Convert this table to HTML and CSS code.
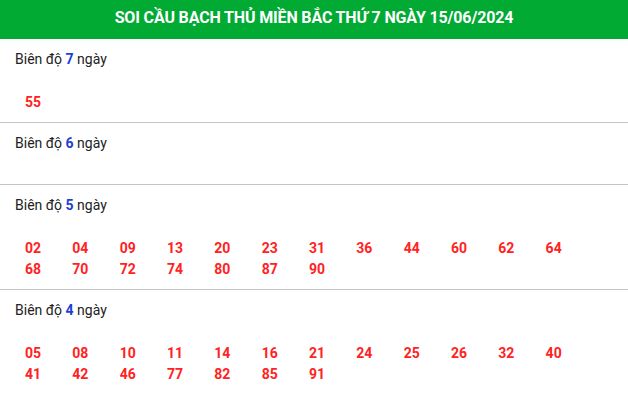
FILE: index.html
```html
<!DOCTYPE html>
<html lang="vi">
<head>
<meta charset="utf-8">
<link rel="stylesheet" href="styles.css">
</head>
<body>
<div class="box">
  <h2 class="title">SOI CẦU BẠCH THỦ MIỀN BẮC THỨ 7 NGÀY 15/06/2024</h2>
  <div class="section">
    <div class="label">Biên độ <b>7</b> ngày</div>
    <div class="nums"><span>55</span></div>
  </div>
  <div class="section">
    <div class="label">Biên độ <b>6</b> ngày</div>
    <div class="nums"></div>
  </div>
  <div class="section">
    <div class="label">Biên độ <b>5</b> ngày</div>
    <div class="nums">
      <span>02</span><span>04</span><span>09</span><span>13</span><span>20</span><span>23</span><span>31</span><span>36</span><span>44</span><span>60</span><span>62</span><span>64</span>
      <span>68</span><span>70</span><span>72</span><span>74</span><span>80</span><span>87</span><span>90</span>
    </div>
  </div>
  <div class="section">
    <div class="label">Biên độ <b>4</b> ngày</div>
    <div class="nums">
      <span>05</span><span>08</span><span>10</span><span>11</span><span>14</span><span>16</span><span>21</span><span>24</span><span>25</span><span>26</span><span>32</span><span>40</span>
      <span>41</span><span>42</span><span>46</span><span>77</span><span>82</span><span>85</span><span>91</span>
    </div>
  </div>
</div>
</body>
</html>
```
FILE: styles.css
```css
html, body {
  margin: 0;
  padding: 0;
  background: #fff;
}
body {
  font-family: Roboto, "Liberation Sans", Arial, sans-serif;
  color: #222;
}
.title {
  margin: 0;
  height: 39px;
  background: #00aa33;
  color: #fff;
  font-size: 16px;
  font-weight: bold;
  text-align: center;
  line-height: 36px;
  letter-spacing: -0.15px;
}
.section {
  border-bottom: 1px solid #c4c4c4;
  padding-top: 9px;
}
.label {
  padding-left: 15px;
  font-size: 14px;
  line-height: 22px;
  color: #222;
}
.label b {
  color: #1c3fd4;
  font-weight: bold;
}
.nums {
  display: grid;
  grid-template-columns: repeat(12, 47.33px);
  padding: 22px 0 9px 25px;
}
.nums:empty {
  padding-bottom: 8px;
}
.nums span {
  color: #ff2222;
  font-weight: bold;
  font-size: 14px;
  line-height: 21px;
}
```
